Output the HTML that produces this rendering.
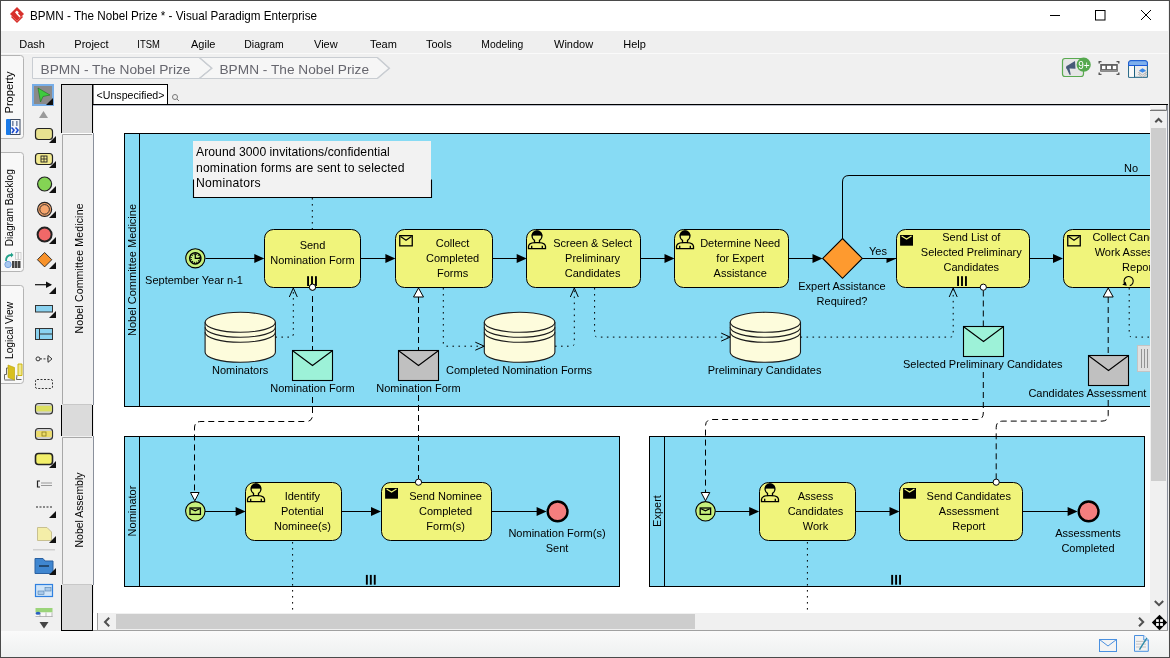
<!DOCTYPE html>
<html><head><meta charset="utf-8"><style>
html,body{margin:0;padding:0;width:1170px;height:658px;overflow:hidden;background:#f0f0f0}
svg{position:absolute;left:0;top:0;display:block;will-change:transform}
text{font-family:"Liberation Sans", sans-serif}
</style></head><body>
<svg width="1170" height="658" viewBox="0 0 1170 658">
<defs>
<clipPath id="cv"><rect x="94" y="106" width="1056" height="507"/></clipPath>
<linearGradient id="sb" x1="0" y1="0" x2="0" y2="1"><stop offset="0" stop-color="#fafafa"/><stop offset="1" stop-color="#eef0f0"/></linearGradient>
</defs>

<!-- window frame -->
<rect x="0" y="0" width="1170" height="658" fill="#f0f0f0"/>
<rect x="1" y="1" width="1167" height="30" fill="#fff"/>
<rect x="1" y="31" width="1167" height="22" fill="#efefef"/>
<rect x="1" y="53" width="1167" height="1" fill="#fafafa"/>
<!-- title -->
<g transform="translate(10,7)">
 <path d="M7 0 L14 7 L7 14 L0 7 Z" fill="#d8312c"/>
 <path d="M1.5 9.5 L7 15 L12.5 9.5" fill="none" stroke="#d8312c" stroke-width="1.5"/>
 <path d="M5 5.3 L6.9 3.6 L8.8 5.5 L8 6.5 L10.6 9.3 L9.6 10.6 L6.8 7.4 Z" fill="#fff"/>
</g>
<text x="30" y="19.6" font-size="12.2" fill="#000" textLength="287" lengthAdjust="spacingAndGlyphs">BPMN - The Nobel Prize * - Visual Paradigm Enterprise</text>
<path d="M1050 15.5 L1060 15.5" stroke="#000" stroke-width="1"/>
<rect x="1095.5" y="10.5" width="9.5" height="9.5" fill="none" stroke="#000" stroke-width="1"/>
<path d="M1141 10 L1151 20 M1151 10 L1141 20" stroke="#000" stroke-width="1"/>
<!-- menu -->
<g font-size="11" fill="#000">
<text x="19.3" y="48">Dash</text>
<text x="74.3" y="48">Project</text>
<text x="137.3" y="48" textLength="22.5" lengthAdjust="spacingAndGlyphs">ITSM</text>
<text x="191" y="48">Agile</text>
<text x="244.3" y="48" textLength="39.5" lengthAdjust="spacingAndGlyphs">Diagram</text>
<text x="314" y="48">View</text>
<text x="370" y="48">Team</text>
<text x="426" y="48">Tools</text>
<text x="481.3" y="48" textLength="42" lengthAdjust="spacingAndGlyphs">Modeling</text>
<text x="554" y="48">Window</text>
<text x="623.3" y="48">Help</text>
</g>
<!-- breadcrumb -->
<path d="M32.5 57.5 L199.3 57.5 L211.8 68.3 L199.3 78.5 L32.5 78.5 Z" fill="#f6f6f6" stroke="#c9cdd2"/>
<path d="M199.3 57.5 L377.3 57.5 L389.3 68.3 L377.3 78.5 L199.3 78.5 L211.8 68.3 Z" fill="#f6f6f6" stroke="#c9cdd2"/>
<path d="M199.3 57.5 L211.8 68.3 L199.3 78.5 M377.3 57.5 L389.3 68.3 L377.3 78.5" fill="none" stroke="#c9cdd2" stroke-width="1.5"/>
<text x="40.5" y="73.6" font-size="13.3" fill="#66666e" textLength="150" lengthAdjust="spacingAndGlyphs">BPMN - The Nobel Prize</text>
<text x="219.5" y="73.6" font-size="13.3" fill="#66666e" textLength="149.5" lengthAdjust="spacingAndGlyphs">BPMN - The Nobel Prize</text>
<!-- right toolbar icons -->
<rect x="1062.5" y="58.5" width="21" height="18" rx="2.5" fill="#e6e6e6" stroke="#5aaa50" stroke-width="1.2"/>
<path d="M1066 67.5 Q1066 65.5 1068 65.2 L1075 61 L1075.5 68.8 L1069.5 68.6 L1070.8 74.8 L1069.5 74.8 L1067 69.3 Q1066 68.7 1066 67.5 Z" fill="#475a78"/>
<circle cx="1083.7" cy="64.7" r="7.1" fill="#55a84e"/>
<text x="1084" y="68.6" font-size="10" fill="#fff" text-anchor="middle">9+</text>
<g stroke="#555" stroke-width="1.4" fill="none">
<path d="M1099.2 63.5 L1099.2 61.6 L1101.5 61.6 M1116.5 61.6 L1118.8 61.6 L1118.8 63.5 M1099.2 72.5 L1099.2 74.4 L1101.5 74.4 M1116.5 74.4 L1118.8 74.4 L1118.8 72.5"/>
</g>
<rect x="1100.2" y="64" width="17.6" height="7.7" fill="#606060"/>
<rect x="1102" y="65.8" width="3.4" height="3.3" fill="#fff"/><rect x="1107" y="65.8" width="4" height="3.3" fill="#fff"/><rect x="1112.8" y="65.8" width="3.4" height="3.3" fill="#fff"/>
<rect x="1101" y="70.2" width="16" height="0.7" fill="#a8a8a8"/>
<path d="M1128.6 77.3 L1128.6 63 Q1128.6 60.7 1131 60.7 L1145 60.7 Q1147.4 60.7 1147.4 63 L1147.4 77.3 Z" fill="#ececec" stroke="#1a6080" stroke-width="1"/>
<path d="M1128.6 65.5 L1128.6 63 Q1128.6 60.7 1131 60.7 L1145 60.7 Q1147.4 60.7 1147.4 63 L1147.4 65.5 Z" fill="#7eb0ec" stroke="#1a5adc" stroke-width="1"/>
<rect x="1129.2" y="66" width="5" height="10.8" fill="#fafafa"/>
<path d="M1134.5 65.5 L1134.5 77.3" stroke="#1a6080" stroke-width="1"/>
<path d="M1138.5 74.5 L1142.5 72 L1146.5 74.5 L1142.5 77 Z" fill="#e8e8e8" stroke="#999" stroke-width="0.6"/>
<path d="M1138.5 72.5 L1142.5 70 L1146.5 72.5 L1142.5 75 Z" fill="#e8e8e8" stroke="#999" stroke-width="0.6"/>
<path d="M1139 70.5 L1142.5 68.3 L1146 70.5 L1142.5 72.7 Z" fill="#3a88e8"/>
<!-- left tabs -->
<path d="M1 55.5 L20.5 55.5 Q23.5 55.5 23.5 58.5 L23.5 135.5 Q23.5 138.5 20.5 138.5 L1 138.5" fill="#f8f8f8" stroke="#b4b4b4"/>
<text transform="translate(13.2,113.5) rotate(-90)" font-size="10.5" fill="#000" textLength="42" lengthAdjust="spacingAndGlyphs">Property</text>
<rect x="10.5" y="119.5" width="9.5" height="15" fill="#f4f6fa" stroke="#3c4a60"/>
<rect x="6" y="119" width="4.5" height="16" rx="1" fill="#1a7ae8"/>
<rect x="12" y="121" width="1.6" height="5" fill="#7a8aa8"/><rect x="16" y="121" width="1.6" height="5" fill="#7a8aa8"/>
<path d="M11.5 127.5 L14 130 L12 133 M15.5 127.5 L18 130 L16 133" fill="none" stroke="#1a4ad0" stroke-width="1.6"/>
<path d="M1 152.5 L20.5 152.5 Q23.5 152.5 23.5 155.5 L23.5 268.5 Q23.5 271.5 20.5 271.5 L1 271.5" fill="#f8f8f8" stroke="#b4b4b4"/>
<text transform="translate(13.2,246.2) rotate(-90)" font-size="10.5" fill="#000" textLength="77" lengthAdjust="spacingAndGlyphs">Diagram Backlog</text>
<circle cx="8" cy="264.5" r="3.2" fill="#a8c8f0" stroke="#6a98d8" stroke-width="0.8"/>
<path d="M6 261 Q6 255 11.5 255" stroke="#20a088" stroke-width="1.8" fill="none"/><path d="M11 252.5 L13.5 255 L11 257.5 Z" fill="#20a088"/>
<rect x="15.5" y="252.5" width="2.5" height="7" fill="none" stroke="#c8c8c8" stroke-width="0.8"/><rect x="18.5" y="252.5" width="2.5" height="7" fill="none" stroke="#c8c8c8" stroke-width="0.8"/>
<rect x="12" y="261" width="2.5" height="7" fill="#444"/><rect x="15" y="261" width="2.5" height="7" fill="#444"/><rect x="18" y="261" width="2.5" height="7" fill="#444"/>
<path d="M1 285.5 L20.5 285.5 Q23.5 285.5 23.5 288.5 L23.5 380.5 Q23.5 383.5 20.5 383.5 L1 383.5" fill="#f8f8f8" stroke="#b4b4b4"/>
<text transform="translate(13.2,359) rotate(-90)" font-size="10.5" fill="#000" textLength="57" lengthAdjust="spacingAndGlyphs">Logical View</text>
<path d="M4.5 379.5 L4.5 374.5 L6.5 374.5 L6.5 368 L8 368 M15 380 L4.5 380 M17 375 L16.5 379.5 L21.5 379.5" fill="none" stroke="#555" stroke-width="0.9"/>
<path d="M8 365 L14.5 367.5 L14.5 380 L8 377.5 Z" fill="#d8c020" stroke="#b8a000" stroke-width="0.6"/>
<path d="M18 364 L22 364 L22 375.5 L18 375.5 Z" fill="#f0e890" stroke="#c8b000" stroke-width="0.9"/>
<rect x="1" y="0" width="0" height="0"/>


<!-- palette -->
<rect x="33" y="85" width="20" height="20" fill="#8a8a8a" stroke="#78aee8" stroke-width="2"/>
<path d="M38 88 L50 95 L43 96.5 L40.5 102 Z" fill="#3ecb3e" stroke="#207020" stroke-width="0.6"/>
<path d="M53 98 L53 105 L46 105 Z" fill="#111"/>
<path d="M39 118 L43.5 111 L48 118 Z" fill="#9a9a9a"/>
<rect x="35.5" y="128.5" width="17" height="11" rx="3" fill="#e8e290" stroke="#222" stroke-width="1.2"/><path d="M56 136 L56 143 L49 143 Z" fill="#111"/>
<rect x="35.5" y="153.5" width="17" height="11" rx="3" fill="#f2ea90" stroke="#222" stroke-width="1.2"/><rect x="41" y="156" width="6" height="6" fill="none" stroke="#222" stroke-width="0.9"/><path d="M44 156 L44 162 M41 159 L47 159" stroke="#222" stroke-width="0.8"/><path d="M56 161 L56 168 L49 168 Z" fill="#111"/>
<circle cx="44.6" cy="184" r="7" fill="#84d454" stroke="#222" stroke-width="1.2"/><path d="M56 186 L56 193 L49 193 Z" fill="#111"/>
<circle cx="44.6" cy="209.4" r="7" fill="#f6a66e" stroke="#222" stroke-width="1.2"/><circle cx="44.6" cy="209.4" r="4.8" fill="none" stroke="#222" stroke-width="0.9"/><path d="M56 211 L56 218 L49 218 Z" fill="#111"/>
<circle cx="44.6" cy="234.6" r="7" fill="#f06868" stroke="#222" stroke-width="2"/><path d="M56 237 L56 244 L49 244 Z" fill="#111"/>
<path d="M44.6 252.5 L51.8 259.7 L44.6 266.9 L37.4 259.7 Z" fill="#f8922a" stroke="#222" stroke-width="0.9"/><path d="M56 262 L56 269 L49 269 Z" fill="#111"/>
<path d="M35 284.7 L51 284.7" stroke="#111" stroke-width="1.2"/><path d="M52 284.7 L46 281.5 L46 288 Z" fill="#111"/><path d="M56 287 L56 294 L49 294 Z" fill="#111"/>
<rect x="35.5" y="305.5" width="17" height="6.5" fill="#8ad2f0" stroke="#333"/><path d="M56 311 L56 318 L49 318 Z" fill="#111"/>
<rect x="35.5" y="328.5" width="17" height="11" fill="#8ad2f0" stroke="#333"/><path d="M39.5 328.5 L39.5 339.5 M39.5 334 L52.5 334" stroke="#333"/>
<circle cx="38" cy="358.9" r="2" fill="none" stroke="#333"/><path d="M40 358.9 L48 358.9" stroke="#333" stroke-dasharray="2 1.5"/><path d="M48 355.5 L52 358.9 L48 362.3 Z" fill="none" stroke="#333"/>
<rect x="35.5" y="379.5" width="17" height="9" rx="1.5" fill="#eee" stroke="#333" stroke-dasharray="2 1.5"/>
<rect x="35.5" y="403.5" width="17" height="10.5" rx="3" fill="#d0d0d0" stroke="#333" stroke-width="1.2"/><rect x="36.2" y="405.8" width="15.6" height="5.6" fill="#dce060"/>
<rect x="35.5" y="428.5" width="17" height="11" rx="3" fill="#d0d0d0" stroke="#333" stroke-width="1.2"/><rect x="36.2" y="431" width="15.6" height="6" fill="#ecdc6a"/><rect x="42" y="432" width="4" height="4" fill="none" stroke="#8a7a20" stroke-width="0.8"/>
<rect x="35.5" y="453.5" width="17" height="11" rx="3" fill="#f2ef6a" stroke="#222" stroke-width="1.6"/><path d="M56 461 L56 468 L49 468 Z" fill="#111"/>
<path d="M40 481 L37.5 481 L37.5 487 L40 487" fill="none" stroke="#222" stroke-width="1.2"/><path d="M41 483 L52 483 M41 485.5 L52 485.5" stroke="#999"/>
<path d="M36 507 L52 507" stroke="#222" stroke-dasharray="2 1.5"/><path d="M56 511 L56 518 L49 518 Z" fill="#111"/>
<path d="M37.5 527.5 L47 527.5 L51.5 532 L51.5 540.5 L37.5 540.5 Z" fill="#f4eea8" stroke="#c8c090"/><path d="M56 536 L56 543 L49 543 Z" fill="#111"/>
<rect x="33" y="549" width="22" height="1.5" fill="#cfcfcf"/>
<path d="M35 558.5 L43 558.5 L45 561 L53 561 L53 573.5 L35 573.5 Z" fill="#3f86d0" stroke="#2a60a0"/><path d="M39 566 L49 566" stroke="#123" stroke-width="1.2"/><path d="M56 568 L56 575 L49 575 Z" fill="#111"/>
<rect x="35.5" y="584.5" width="17" height="12" fill="#cfe4f8" stroke="#2f80e0" stroke-width="1.2"/><rect x="38" y="591" width="6" height="3.5" fill="#a8c8e8" stroke="#5080b0" stroke-width="0.6"/><rect x="45" y="587.5" width="6" height="3.5" fill="#a8c8e8" stroke="#5080b0" stroke-width="0.6"/>
<rect x="35.5" y="608" width="17" height="4.5" fill="#9bd47a"/><rect x="35.5" y="612.5" width="17" height="3.5" fill="#f8f8f8"/><path d="M35.5 616.5 L52.5 616.5 M40 612.5 L40 617 M46 612.5 L46 617 M52 612.5 L52 617" stroke="#aaa" stroke-width="0.8"/><ellipse cx="38" cy="613.2" rx="2.5" ry="1.5" fill="#2a60c0"/>
<path d="M39.5 622 L48.5 622 L44 628.5 Z" fill="#444"/>

<!-- header column + row -->
<rect x="61" y="84" width="33" height="547" fill="#f0f0f0"/>
<rect x="61" y="84" width="32" height="49" fill="#dbdbdb"/>
<rect x="61" y="405" width="32" height="31" fill="#dbdbdb"/>
<rect x="61" y="585" width="32" height="46" fill="#dbdbdb"/>
<path d="M61.5 84 L61.5 133 M92.5 84 L92.5 133 M61.5 405 L61.5 436 M92.5 405 L92.5 436 M61.5 585 L61.5 631 M92.5 585 L92.5 631 M61 84.5 L93 84.5 M61 630.5 L93 630.5" stroke="#000"/>
<rect x="62" y="133" width="31" height="1" fill="#fff"/>
<path d="M62.5 404 L62.5 134.5 L92 134.5" fill="none" stroke="#a8a8a8"/>
<path d="M62.5 404.5 L92 404.5" stroke="#c8c8c8"/>
<path d="M62.5 584 L62.5 437.5 L92 437.5" fill="none" stroke="#a8a8a8"/>
<path d="M62.5 584.5 L92 584.5" stroke="#c8c8c8"/>
<path d="M93.5 133 L93.5 405 M93.5 436 L93.5 585" stroke="#8a909c"/>
<text transform="translate(82.6,268.5) rotate(-90)" font-size="10.5" fill="#000" text-anchor="middle" textLength="130" lengthAdjust="spacing">Nobel Committee Medicine</text>
<text transform="translate(82.6,510) rotate(-90)" font-size="10.5" fill="#000" text-anchor="middle" textLength="75" lengthAdjust="spacing">Nobel Assembly</text>
<rect x="93" y="84.5" width="74.5" height="20" fill="#fff" stroke="#000"/>
<text x="96.5" y="98.9" font-size="11" fill="#000" textLength="68" lengthAdjust="spacingAndGlyphs">&lt;Unspecified&gt;</text>
<circle cx="175" cy="97" r="2.5" fill="none" stroke="#777"/><path d="M177 99 L179 101" stroke="#777"/>
<path d="M92.5 104.5 L1168 104.5" stroke="#000"/><path d="M93 105.5 L1150 105.5" stroke="#b8bcc8"/>
<!-- scrollbars -->
<rect x="1150" y="105" width="18" height="508" fill="#f0f0f0"/>
<rect x="1150" y="105" width="17" height="6" fill="#f4f4f4"/><path d="M1150 110.5 L1166.5 110.5 L1166.5 105" fill="none" stroke="#777"/><path d="M1151 109.5 L1165.5 109.5" stroke="#c8c8c8"/>
<path d="M1155.3 122.3 L1158.6 119 L1161.9 122.3" fill="none" stroke="#505050" stroke-width="2"/>
<rect x="1151" y="128" width="15" height="353" fill="#cdcdcd"/>
<path d="M1154.8 601 L1159 605.2 L1163.2 601" fill="none" stroke="#505050" stroke-width="2"/>
<path d="M1167.5 105 L1167.5 630" stroke="#8a909c"/>
<rect x="97" y="613" width="1053" height="18" fill="#f0f0f0"/>
<rect x="93" y="613" width="4" height="18" fill="#fff"/>
<path d="M109.2 617.8 L105 622 L109.2 626.2" fill="none" stroke="#505050" stroke-width="2"/><path d="M97.5 613 L97.5 630" stroke="#a0a0a0"/>
<rect x="116" y="614" width="579" height="15" fill="#cdcdcd"/>
<path d="M1139 617.8 L1143.2 622 L1139 626.2" fill="none" stroke="#505050" stroke-width="2"/>
<path d="M93 630.5 L1168 630.5" stroke="#a0a0a0"/>
<!-- move cross -->
<path d="M1159.5 614.8 L1167.2 622.5 L1159.5 630.2 L1151.8 622.5 Z" fill="#000"/>
<rect x="1156.1" y="619.3" width="2.7" height="2.6" fill="#fff"/><rect x="1160.1" y="619.3" width="2.8" height="2.6" fill="#fff"/>
<rect x="1156.1" y="623.1" width="2.7" height="2.8" fill="#fff"/><rect x="1160.1" y="623.1" width="2.8" height="2.8" fill="#fff"/>
<!-- status bar -->
<rect x="1" y="631" width="1167" height="26" fill="url(#sb)"/>
<rect x="1099.5" y="639.5" width="17" height="12" fill="#f4f4f4" stroke="#4a90e0"/>
<path d="M1099.5 639.5 L1108 646 L1116.5 639.5" fill="none" stroke="#4a90e0"/>
<path d="M1134.5 635.5 L1143.8 635.5 L1148.3 640 L1148.3 651.3 L1134.5 651.3 Z" fill="#f2f2f2" stroke="#4a90e0"/>
<path d="M1143.8 635.5 L1143.8 640 L1148.3 640" fill="#fff" stroke="#4a90e0"/>
<path d="M1136 641.4 L1146 641.4 M1136 644.1 L1146 644.1 M1136 647 L1146 647" stroke="#c4c4c4"/>
<path d="M1139.5 649.7 L1146.8 638" stroke="#2a8aa8" stroke-width="1.4"/>
<!-- window border -->
<path d="M0.5 0 L0.5 658 M1169.5 0 L1169.5 658 M0 0.5 L1170 0.5 M0 657.5 L1170 657.5" stroke="#4a4a4a"/>

<g clip-path="url(#cv)">
<rect x="94" y="106" width="1056" height="507" fill="#fff"/>
<rect x="124.5" y="133.5" width="1100" height="273" fill="#87dbf4" stroke="#000" stroke-width="1"/>
<path d="M139.5 133.5 L139.5 406.5" stroke="#000" stroke-width="1"/>
<text x="0" y="0" font-size="11" text-anchor="middle" fill="#000" transform="translate(136,270) rotate(-90)">Nobel Committee Medicine</text>
<rect x="124.5" y="436.5" width="495" height="150" fill="#87dbf4" stroke="#000" stroke-width="1"/>
<path d="M139.5 436.5 L139.5 586.5" stroke="#000" stroke-width="1"/>
<text x="0" y="0" font-size="11" text-anchor="middle" fill="#000" transform="translate(136,511) rotate(-90)">Nominator</text>
<rect x="365.9" y="574.9" width="1.9" height="9.8" fill="#000"/>
<rect x="369.84999999999997" y="574.9" width="1.9" height="9.8" fill="#000"/>
<rect x="373.79999999999995" y="574.9" width="1.9" height="9.8" fill="#000"/>
<rect x="649.5" y="436.5" width="495" height="150" fill="#87dbf4" stroke="#000" stroke-width="1"/>
<path d="M664.5 436.5 L664.5 586.5" stroke="#000" stroke-width="1"/>
<text x="0" y="0" font-size="11" text-anchor="middle" fill="#000" transform="translate(661,511) rotate(-90)">Expert</text>
<rect x="891.2" y="574.9" width="1.9" height="9.8" fill="#000"/>
<rect x="895.1500000000001" y="574.9" width="1.9" height="9.8" fill="#000"/>
<rect x="899.1" y="574.9" width="1.9" height="9.8" fill="#000"/>
<rect x="193" y="141" width="238" height="56" fill="#f2f2f2"/>
<path d="M193.5 179.5 L193.5 197.5 L431.5 197.5 L431.5 179.5" stroke="#000" stroke-width="1.1" fill="none"/>
<text x="196" y="156.2" font-size="12.2" text-anchor="start" fill="#000" textLength="193.7" lengthAdjust="spacing">Around 3000 invitations/confidential</text>
<text x="196" y="171.79999999999998" font-size="12.2" text-anchor="start" fill="#000" textLength="208.5" lengthAdjust="spacing">nomination forms are sent to selected</text>
<text x="196" y="187.39999999999998" font-size="12.2" text-anchor="start" fill="#000" textLength="64.6" lengthAdjust="spacing">Nominators</text>
<path d="M312.3 198 L312.3 229" stroke="#000" stroke-width="1" stroke-dasharray="1.6 4.4" fill="none"/>
<path d="M205.5 258.5 L262 258.5" stroke="#000" stroke-width="1" fill="none"/>
<path d="M264.3 258.5 L254.3 254.0 L254.3 263.0 Z" fill="#000"/>
<path d="M360.7 258.5 L393 258.5" stroke="#000" stroke-width="1" fill="none"/>
<path d="M395.4 258.5 L385.4 254.0 L385.4 263.0 Z" fill="#000"/>
<path d="M492 258.5 L524 258.5" stroke="#000" stroke-width="1" fill="none"/>
<path d="M526.7 258.5 L516.7 254.0 L516.7 263.0 Z" fill="#000"/>
<path d="M640.5 258.5 L672 258.5" stroke="#000" stroke-width="1" fill="none"/>
<path d="M674.5 258.5 L664.5 254.0 L664.5 263.0 Z" fill="#000"/>
<path d="M788.5 258.5 L820 258.5" stroke="#000" stroke-width="1" fill="none"/>
<path d="M822.5 258.5 L812.5 254.0 L812.5 263.0 Z" fill="#000"/>
<path d="M862 258.5 L896 258.5" stroke="#000" stroke-width="1" fill="none"/>
<path d="M896.5 258.5 L886.5 258.5 L886.5 263.0 Z" fill="#000"/>
<text x="878" y="255.3" font-size="11" text-anchor="middle" fill="#000" >Yes</text>
<path d="M842.5 238.5 L842.5 182 Q842.5 175.5 849 175.5 L1160 175.5" stroke="#000" stroke-width="1" fill="none"/>
<text x="1131" y="172" font-size="11" text-anchor="middle" fill="#000" >No</text>
<path d="M1029.6 258.5 L1061 258.5" stroke="#000" stroke-width="1" fill="none"/>
<path d="M1063 258.5 L1053 254.0 L1053 263.0 Z" fill="#000"/>
<circle cx="195.3" cy="258.3" r="9.6" fill="#c7f07d" stroke="#000" stroke-width="1.1"/>
<circle cx="195.3" cy="258.3" r="5.6" fill="none" stroke="#000" stroke-width="1.5"/>
<circle cx="195.3" cy="258.3" r="4.2" fill="none" stroke="#000" stroke-width="1.2" stroke-dasharray="1 1.2"/>
<path d="M195.3 253.5 L195.3 258.3 L200.2 258.3" stroke="#000" stroke-width="1.2" fill="none"/>
<text x="194" y="284" font-size="11" text-anchor="middle" fill="#000" >September Year n-1</text>
<rect x="264.5" y="229.5" width="96.0" height="58.0" rx="9" ry="9" fill="#f0f47b" stroke="#000" stroke-width="1"/>
<text x="312.5" y="249.3" font-size="11" text-anchor="middle" fill="#000" >Send</text>
<text x="312.5" y="264.3" font-size="11" text-anchor="middle" fill="#000" >Nomination Form</text>
<rect x="307.1" y="276.2" width="1.9" height="9.8" fill="#000"/>
<rect x="311.05" y="276.2" width="1.9" height="9.8" fill="#000"/>
<rect x="315.0" y="276.2" width="1.9" height="9.8" fill="#000"/>
<circle cx="312.5" cy="287.2" r="3.1" fill="#fff" stroke="#000" stroke-width="1"/>
<rect x="395.5" y="229.5" width="97.0" height="58.0" rx="9" ry="9" fill="#f0f47b" stroke="#000" stroke-width="1"/>
<text x="452.6" y="247.3" font-size="11" text-anchor="middle" fill="#000" >Collect</text>
<text x="452.6" y="262.3" font-size="11" text-anchor="middle" fill="#000" >Completed</text>
<text x="452.6" y="277.3" font-size="11" text-anchor="middle" fill="#000" >Forms</text>
<rect x="399.75" y="235.65" width="12.5" height="10.2" fill="none" stroke="#000" stroke-width="1.3"/><path d="M400.55 236.45000000000002 L406.0 240.24 L411.45 236.45000000000002" fill="none" stroke="#000" stroke-width="1.2"/>
<rect x="526.5" y="229.5" width="114.0" height="58.0" rx="9" ry="9" fill="#f0f47b" stroke="#000" stroke-width="1"/>
<text x="592.6" y="247.3" font-size="11" text-anchor="middle" fill="#000" >Screen &amp; Select</text>
<text x="592.6" y="262.3" font-size="11" text-anchor="middle" fill="#000" >Preliminary</text>
<text x="592.6" y="277.3" font-size="11" text-anchor="middle" fill="#000" >Candidates</text>
<g transform="translate(526.5,229.5)" fill="none" stroke="#000" stroke-width="1.3"><path d="M8 10.9 A4.9 4.9 0 1 1 13 10.9 L13 13.1 Q18.8 13.6 19 16.8 L19 19.1 L2 19.1 L2 16.8 Q2.2 13.6 8 13.1 Z"/><path d="M8 13.1 L13 13.1 M5.2 16.3 L5.2 19 M15.8 16.3 L15.8 19"/><path d="M5.6 5.8 A4.9 4.9 0 0 1 15.4 5.8 Z" fill="#000" stroke-width="0.6"/></g>
<rect x="674.5" y="229.5" width="114.0" height="58.0" rx="9" ry="9" fill="#f0f47b" stroke="#000" stroke-width="1"/>
<text x="740.2" y="247.3" font-size="11" text-anchor="middle" fill="#000" >Determine Need</text>
<text x="740.2" y="262.3" font-size="11" text-anchor="middle" fill="#000" >for Expert</text>
<text x="740.2" y="277.3" font-size="11" text-anchor="middle" fill="#000" >Assistance</text>
<g transform="translate(674.5,229.5)" fill="none" stroke="#000" stroke-width="1.3"><path d="M8 10.9 A4.9 4.9 0 1 1 13 10.9 L13 13.1 Q18.8 13.6 19 16.8 L19 19.1 L2 19.1 L2 16.8 Q2.2 13.6 8 13.1 Z"/><path d="M8 13.1 L13 13.1 M5.2 16.3 L5.2 19 M15.8 16.3 L15.8 19"/><path d="M5.6 5.8 A4.9 4.9 0 0 1 15.4 5.8 Z" fill="#000" stroke-width="0.6"/></g>
<rect x="896.5" y="229.5" width="133.0" height="58.0" rx="9" ry="9" fill="#f0f47b" stroke="#000" stroke-width="1"/>
<text x="971.3" y="241.3" font-size="11" text-anchor="middle" fill="#000" >Send List of</text>
<text x="971.3" y="256.3" font-size="11" text-anchor="middle" fill="#000" >Selected Preliminary</text>
<text x="971.3" y="271.3" font-size="11" text-anchor="middle" fill="#000" >Candidates</text>
<rect x="900.1" y="235.0" width="12.9" height="10.7" fill="#000"/><path d="M901.6 236.0 L906.5500000000001 239.066 L911.5 236.0" fill="none" stroke="#f0f47b" stroke-width="1.2"/>
<rect x="957.1" y="276.2" width="1.9" height="9.8" fill="#000"/>
<rect x="961.0500000000001" y="276.2" width="1.9" height="9.8" fill="#000"/>
<rect x="965.0" y="276.2" width="1.9" height="9.8" fill="#000"/>
<rect x="1063.5" y="229.5" width="137.0" height="58.0" rx="9" ry="9" fill="#f0f47b" stroke="#000" stroke-width="1"/>
<text x="1138.6" y="241.3" font-size="11" text-anchor="middle" fill="#000" >Collect Candidates</text>
<text x="1138.6" y="256.3" font-size="11" text-anchor="middle" fill="#000" >Work Assessment</text>
<text x="1138.6" y="271.3" font-size="11" text-anchor="middle" fill="#000" >Report</text>
<rect x="1067.75" y="235.65" width="12.5" height="10.2" fill="none" stroke="#000" stroke-width="1.3"/><path d="M1068.55 236.45000000000002 L1074.0 240.24 L1079.45 236.45000000000002" fill="none" stroke="#000" stroke-width="1.2"/>
<path d="M1129.8 285.6 A4.6 4.6 0 1 0 1125.2 284.2" fill="none" stroke="#000" stroke-width="1.1"/>
<path d="M1122.3 284.8 L1126.8 285.8 L1125.6 281.8 Z" fill="#000"/>
<path d="M842.5 238.5 L862.3 258.4 L842.5 278.3 L822.7 258.4 Z" fill="#fe9a2f" stroke="#000" stroke-width="1.1"/>
<text x="842" y="290" font-size="11" text-anchor="middle" fill="#000" >Expert Assistance</text>
<text x="842" y="305" font-size="11" text-anchor="middle" fill="#000" >Required?</text>
<path d="M205.1 322.3 L205.1 352.3 A35.14999999999999 10 0 0 0 275.4 352.3 L275.4 322.3 A35.14999999999999 10 0 0 0 205.1 322.3 Z" fill="#fdfcdc" stroke="#1c1c1c" stroke-width="1.1"/>
<path d="M205.1 322.3 A35.14999999999999 10 0 0 0 275.4 322.3" fill="none" stroke="#1c1c1c" stroke-width="1.1"/>
<path d="M205.1 327.3 A35.14999999999999 10 0 0 0 275.4 327.3" fill="none" stroke="#1c1c1c" stroke-width="1.1"/>
<path d="M205.1 332.3 A35.14999999999999 10 0 0 0 275.4 332.3" fill="none" stroke="#1c1c1c" stroke-width="1.1"/>
<text x="240.2" y="373.8" font-size="11" text-anchor="middle" fill="#000" >Nominators</text>
<path d="M484.3 322.3 L484.3 352.3 A35.29999999999998 10 0 0 0 554.9 352.3 L554.9 322.3 A35.29999999999998 10 0 0 0 484.3 322.3 Z" fill="#fdfcdc" stroke="#1c1c1c" stroke-width="1.1"/>
<path d="M484.3 322.3 A35.29999999999998 10 0 0 0 554.9 322.3" fill="none" stroke="#1c1c1c" stroke-width="1.1"/>
<path d="M484.3 327.3 A35.29999999999998 10 0 0 0 554.9 327.3" fill="none" stroke="#1c1c1c" stroke-width="1.1"/>
<path d="M484.3 332.3 A35.29999999999998 10 0 0 0 554.9 332.3" fill="none" stroke="#1c1c1c" stroke-width="1.1"/>
<text x="519" y="373.8" font-size="11" text-anchor="middle" fill="#000" >Completed Nomination Forms</text>
<path d="M730.2 322.3 L730.2 352.3 A35.14999999999998 10 0 0 0 800.5 352.3 L800.5 322.3 A35.14999999999998 10 0 0 0 730.2 322.3 Z" fill="#fdfcdc" stroke="#1c1c1c" stroke-width="1.1"/>
<path d="M730.2 322.3 A35.14999999999998 10 0 0 0 800.5 322.3" fill="none" stroke="#1c1c1c" stroke-width="1.1"/>
<path d="M730.2 327.3 A35.14999999999998 10 0 0 0 800.5 327.3" fill="none" stroke="#1c1c1c" stroke-width="1.1"/>
<path d="M730.2 332.3 A35.14999999999998 10 0 0 0 800.5 332.3" fill="none" stroke="#1c1c1c" stroke-width="1.1"/>
<text x="764.6" y="373.8" font-size="11" text-anchor="middle" fill="#000" >Preliminary Candidates</text>
<path d="M275.4 337.1 L290 337.1 Q293.3 337.1 293.3 334 L293.3 289" stroke="#000" stroke-width="1" stroke-dasharray="1.6 4.4" fill="none"/>
<path d="M289.3 297 L293.3 288 L297.3 297" fill="none" stroke="#000" stroke-width="1"/>
<path d="M443.3 288 L443.3 343 Q443.3 346.2 446.5 346.2 L483 346.2" stroke="#000" stroke-width="1" stroke-dasharray="1.6 4.4" fill="none"/>
<path d="M475.3 342.2 L484.3 346.2 L475.3 350.2" fill="none" stroke="#000" stroke-width="1"/>
<path d="M555 346.2 L571 346.2 Q574.3 346.2 574.3 343 L574.3 289" stroke="#000" stroke-width="1" stroke-dasharray="1.6 4.4" fill="none"/>
<path d="M570.3 297 L574.3 288 L578.3 297" fill="none" stroke="#000" stroke-width="1"/>
<path d="M594.6 288 L594.6 334 Q594.6 337.1 598 337.1 L729 337.1" stroke="#000" stroke-width="1" stroke-dasharray="1.6 4.4" fill="none"/>
<path d="M721.2 333.1 L730.2 337.1 L721.2 341.1" fill="none" stroke="#000" stroke-width="1"/>
<path d="M800.5 337.1 L950 337.1 Q953.2 337.1 953.2 334 L953.2 289" stroke="#000" stroke-width="1" stroke-dasharray="1.6 4.4" fill="none"/>
<path d="M949.2 297 L953.2 288 L957.2 297" fill="none" stroke="#000" stroke-width="1"/>
<path d="M1129.2 288 L1129.2 334 Q1129.2 337.1 1132.5 337.1 L1160 337.1" stroke="#000" stroke-width="1" stroke-dasharray="1.6 4.4" fill="none"/>
<path d="M292.6 542 L292.6 615" stroke="#000" stroke-width="1" stroke-dasharray="1.6 4.4" fill="none"/>
<path d="M807.4 542 L807.4 615" stroke="#000" stroke-width="1" stroke-dasharray="1.6 4.4" fill="none"/>
<path d="M312.5 296 L312.5 350.3" stroke="#000" stroke-width="1" stroke-dasharray="6 4" fill="none"/>
<path d="M312.5 397 L312.5 415 Q312.5 421.5 306 421.5 L201 421.5 Q194.5 421.5 194.5 428 L194.5 492" stroke="#000" stroke-width="1" stroke-dasharray="6 4" fill="none"/>
<path d="M190.5 492.5 L194.8 500.8 L199.10000000000002 492.5 Z" fill="#fff" stroke="#000" stroke-width="1"/>
<rect x="292.5" y="350.5" width="40.0" height="30.0" fill="#9df2d8" stroke="#000" stroke-width="1.1"/>
<path d="M293.0 351.0 L312.5 365.5 L332.0 351.0" fill="none" stroke="#000" stroke-width="1.1"/>
<text x="312.5" y="391.8" font-size="11" text-anchor="middle" fill="#000" >Nomination Form</text>
<circle cx="312.5" cy="287.2" r="3.1" fill="#fff" stroke="#000" stroke-width="1"/>
<path d="M418.5 297 L418.5 350.3" stroke="#000" stroke-width="1" stroke-dasharray="6 4" fill="none"/>
<path d="M413.5 297 L418.5 288 L423.5 297 Z" fill="#fff" stroke="#000" stroke-width="1"/>
<path d="M418.5 395 L418.5 479" stroke="#000" stroke-width="1" stroke-dasharray="6 4" fill="none"/>
<rect x="398.5" y="350.5" width="40.0" height="30.0" fill="#c0c0c0" stroke="#000" stroke-width="1.1"/>
<path d="M399.0 351.0 L418.5 365.5 L438.0 351.0" fill="none" stroke="#000" stroke-width="1.1"/>
<text x="418.5" y="391.8" font-size="11" text-anchor="middle" fill="#000" >Nomination Form</text>
<path d="M983.3 290.5 L983.3 326.4" stroke="#000" stroke-width="1" stroke-dasharray="6 4" fill="none"/>
<path d="M983.3 372 L983.3 413 Q983.3 419.5 977 419.5 L712 419.5 Q705.5 419.5 705.5 426 L705.5 492" stroke="#000" stroke-width="1" stroke-dasharray="6 4" fill="none"/>
<path d="M701.2 492.5 L705.5 500.8 L709.8 492.5 Z" fill="#fff" stroke="#000" stroke-width="1"/>
<rect x="963.5" y="326.5" width="40.0" height="30.0" fill="#9df2d8" stroke="#000" stroke-width="1.1"/>
<path d="M964.0 327.0 L983.5 341.5 L1003.0 327.0" fill="none" stroke="#000" stroke-width="1.1"/>
<text x="982.8" y="367.8" font-size="11" text-anchor="middle" fill="#000" >Selected Preliminary Candidates</text>
<circle cx="983.3" cy="287.2" r="3.1" fill="#fff" stroke="#000" stroke-width="1"/>
<path d="M1108.2 297 L1108.2 355" stroke="#000" stroke-width="1" stroke-dasharray="6 4" fill="none"/>
<path d="M1103.2 297 L1108.2 288 L1113.2 297 Z" fill="#fff" stroke="#000" stroke-width="1"/>
<path d="M1108.2 400 L1108.2 415 Q1108.2 421.1 1102 421.1 L1003 421.1 Q996.2 421.1 996.2 427.5 L996.2 479" stroke="#000" stroke-width="1" stroke-dasharray="6 4" fill="none"/>
<rect x="1088.5" y="355.5" width="40.0" height="30.0" fill="#c0c0c0" stroke="#000" stroke-width="1.1"/>
<path d="M1089.0 356.0 L1108.5 370.5 L1128.0 356.0" fill="none" stroke="#000" stroke-width="1.1"/>
<text x="1087.4" y="397.2" font-size="11" text-anchor="middle" fill="#000" >Candidates Assessment</text>
<circle cx="195.3" cy="511.3" r="9.7" fill="#c7f07d" stroke="#000" stroke-width="1.1"/>
<rect x="190" y="508" width="10.4" height="6.4" fill="none" stroke="#000" stroke-width="1.3"/><path d="M190.8 508.8 L195.2 510.88 L199.6 508.8" fill="none" stroke="#000" stroke-width="1.2"/>
<path d="M205 511.5 L243 511.5" stroke="#000" stroke-width="1" fill="none"/>
<path d="M245.6 511.5 L235.6 507.0 L235.6 516.0 Z" fill="#000"/>
<rect x="245.5" y="482.5" width="96.0" height="58.0" rx="9" ry="9" fill="#f0f47b" stroke="#000" stroke-width="1"/>
<text x="302.4" y="500.2" font-size="11" text-anchor="middle" fill="#000" >Identify</text>
<text x="302.4" y="515.2" font-size="11" text-anchor="middle" fill="#000" >Potential</text>
<text x="302.4" y="530.2" font-size="11" text-anchor="middle" fill="#000" >Nominee(s)</text>
<g transform="translate(245.5,482.5)" fill="none" stroke="#000" stroke-width="1.3"><path d="M8 10.9 A4.9 4.9 0 1 1 13 10.9 L13 13.1 Q18.8 13.6 19 16.8 L19 19.1 L2 19.1 L2 16.8 Q2.2 13.6 8 13.1 Z"/><path d="M8 13.1 L13 13.1 M5.2 16.3 L5.2 19 M15.8 16.3 L15.8 19"/><path d="M5.6 5.8 A4.9 4.9 0 0 1 15.4 5.8 Z" fill="#000" stroke-width="0.6"/></g>
<path d="M341.7 511.5 L379 511.5" stroke="#000" stroke-width="1" fill="none"/>
<path d="M381 511.5 L371 507.0 L371 516.0 Z" fill="#000"/>
<rect x="381.5" y="482.5" width="110.0" height="58.0" rx="9" ry="9" fill="#f0f47b" stroke="#000" stroke-width="1"/>
<text x="445.6" y="500.2" font-size="11" text-anchor="middle" fill="#000" >Send Nominee</text>
<text x="445.6" y="515.2" font-size="11" text-anchor="middle" fill="#000" >Completed</text>
<text x="445.6" y="530.2" font-size="11" text-anchor="middle" fill="#000" >Form(s)</text>
<rect x="385.1" y="488.0" width="12.9" height="10.7" fill="#000"/><path d="M386.6 489.0 L391.55 492.066 L396.5 489.0" fill="none" stroke="#f0f47b" stroke-width="1.2"/>
<circle cx="418.5" cy="482.2" r="3.1" fill="#fff" stroke="#000" stroke-width="1"/>
<path d="M491.8 511.5 L540 511.5" stroke="#000" stroke-width="1" fill="none"/>
<path d="M546.6 511.5 L536.6 507.0 L536.6 516.0 Z" fill="#000"/>
<circle cx="557.6" cy="511.4" r="9.9" fill="#f47e7e" stroke="#000" stroke-width="2.4"/>
<text x="557" y="537" font-size="11" text-anchor="middle" fill="#000" >Nomination Form(s)</text>
<text x="557" y="551.5" font-size="11" text-anchor="middle" fill="#000" >Sent</text>
<circle cx="705.5" cy="511.3" r="9.7" fill="#c7f07d" stroke="#000" stroke-width="1.1"/>
<rect x="700.2" y="508" width="10.4" height="6.4" fill="none" stroke="#000" stroke-width="1.3"/><path d="M701.0 508.8 L705.4000000000001 510.88 L709.8000000000001 508.8" fill="none" stroke="#000" stroke-width="1.2"/>
<path d="M715.5 511.5 L757 511.5" stroke="#000" stroke-width="1" fill="none"/>
<path d="M759.2 511.5 L749.2 507.0 L749.2 516.0 Z" fill="#000"/>
<rect x="759.5" y="482.5" width="96.0" height="58.0" rx="9" ry="9" fill="#f0f47b" stroke="#000" stroke-width="1"/>
<text x="815.5" y="500.2" font-size="11" text-anchor="middle" fill="#000" >Assess</text>
<text x="815.5" y="515.2" font-size="11" text-anchor="middle" fill="#000" >Candidates</text>
<text x="815.5" y="530.2" font-size="11" text-anchor="middle" fill="#000" >Work</text>
<g transform="translate(759.5,482.5)" fill="none" stroke="#000" stroke-width="1.3"><path d="M8 10.9 A4.9 4.9 0 1 1 13 10.9 L13 13.1 Q18.8 13.6 19 16.8 L19 19.1 L2 19.1 L2 16.8 Q2.2 13.6 8 13.1 Z"/><path d="M8 13.1 L13 13.1 M5.2 16.3 L5.2 19 M15.8 16.3 L15.8 19"/><path d="M5.6 5.8 A4.9 4.9 0 0 1 15.4 5.8 Z" fill="#000" stroke-width="0.6"/></g>
<path d="M855.9 511.5 L897 511.5" stroke="#000" stroke-width="1" fill="none"/>
<path d="M899.5 511.5 L889.5 507.0 L889.5 516.0 Z" fill="#000"/>
<rect x="899.5" y="482.5" width="123.0" height="58.0" rx="9" ry="9" fill="#f0f47b" stroke="#000" stroke-width="1"/>
<text x="968.8" y="500.2" font-size="11" text-anchor="middle" fill="#000" >Send Candidates</text>
<text x="968.8" y="515.2" font-size="11" text-anchor="middle" fill="#000" >Assessment</text>
<text x="968.8" y="530.2" font-size="11" text-anchor="middle" fill="#000" >Report</text>
<rect x="903.1" y="488.0" width="12.9" height="10.7" fill="#000"/><path d="M904.6 489.0 L909.5500000000001 492.066 L914.5 489.0" fill="none" stroke="#f0f47b" stroke-width="1.2"/>
<circle cx="996.2" cy="482.2" r="3.1" fill="#fff" stroke="#000" stroke-width="1"/>
<path d="M1022 511.5 L1070 511.5" stroke="#000" stroke-width="1" fill="none"/>
<path d="M1077.6 511.5 L1067.6 507.0 L1067.6 516.0 Z" fill="#000"/>
<circle cx="1088.6" cy="511.4" r="9.9" fill="#f47e7e" stroke="#000" stroke-width="2.4"/>
<text x="1088" y="537" font-size="11" text-anchor="middle" fill="#000" >Assessments</text>
<text x="1088" y="551.5" font-size="11" text-anchor="middle" fill="#000" >Completed</text>
<rect x="1137.5" y="345.5" width="14" height="26" fill="#e0e0e0" stroke="#c4c4c4"/>
<path d="M1141.5 349 L1141.5 368 M1144.5 349 L1144.5 368 M1147.5 349 L1147.5 368" stroke="#8a8a8a" stroke-width="0.9"/>
</g>
</svg>
</body></html>
